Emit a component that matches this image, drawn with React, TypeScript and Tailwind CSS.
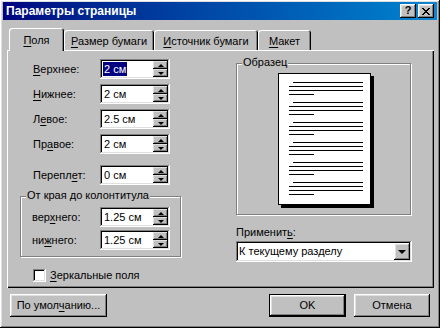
import React from 'react';

const raised = 'shadow-[inset_-1px_-1px_#000,inset_1px_1px_#fff,inset_-2px_-2px_#808080,inset_2px_2px_#dfdfdf]';
const sunken = 'shadow-[inset_-1px_-1px_#fff,inset_1px_1px_#808080,inset_-2px_-2px_#dfdfdf,inset_2px_2px_#000]';
const smallRaised = 'shadow-[inset_-1px_-1px_#000,inset_1px_1px_#dfdfdf,inset_-2px_-2px_#808080]';

// label with an underlined access key
const Acc = ({ pre = '', k, post = '' }: { pre?: string; k: string; post?: string }) => (
    <span>
        {pre}
        <u className="underline-offset-[2px]">{k}</u>
        {post}
    </span>
);

const SpinBtn = ({ up }: { up?: boolean }) => (
    <div className={`flex h-[8px] items-center justify-center bg-[#c0c0c0] ${smallRaised}`}>
        <div
            className={
                up
                    ? 'h-0 w-0 border-x-[3px] border-b-[3px] border-x-transparent border-b-black'
                    : 'h-0 w-0 border-x-[3px] border-t-[3px] border-x-transparent border-t-black'
            }
        />
    </div>
);

const Spin = ({ value, selected }: { value: string; selected?: boolean }) => (
    <div className={`flex h-[20px] w-[70px] bg-white p-[2px] ${sunken}`}>
        <div className="flex flex-1 items-center pl-[1px]">
            <span className={selected ? 'bg-[#000080] px-px leading-[14px] text-white' : 'px-px'}>{value}</span>
        </div>
        <div className="flex w-[15px] flex-col">
            <SpinBtn up />
            <SpinBtn />
        </div>
    </div>
);

const Row = ({ label, value, selected, labelW }: { label: React.ReactNode; value: string; selected?: boolean; labelW: string }) => (
    <div className="flex h-[20px] items-center">
        <div className={labelW}>{label}</div>
        <Spin value={value} selected={selected} />
    </div>
);

const Button = ({ children, w, isDefault }: { children: React.ReactNode; w: string; isDefault?: boolean }) => (
    <div className={`h-[23px] ${w} ${isDefault ? 'border border-black' : ''}`}>
        <div className={`flex h-full w-full items-center justify-center bg-[#c0c0c0] ${raised}`}>{children}</div>
    </div>
);

const Tab = ({ children, w, active }: { children: React.ReactNode; w: string; active?: boolean }) => (
    <div
        className={
            active
                ? `relative z-10 -mb-px flex h-[23px] ${w} justify-center rounded-t-[3px] bg-[#c0c0c0] pt-[6px] shadow-[inset_1px_1px_#fff,inset_-1px_0_#000,inset_-2px_0_#808080]`
                : `flex h-[20px] ${w} justify-center rounded-t-[3px] bg-[#c0c0c0] pt-[5px] shadow-[inset_1px_1px_#fff,inset_-1px_0_#000,inset_-2px_0_#808080]`
        }
    >
        <span className="leading-[13px]">{children}</span>
    </div>
);

const previewGroups = [0, 1, 2, 3, 4, 5];

export default function App() {
    return (
        <div
            className={`flex h-[328px] w-[440px] flex-col bg-[#c0c0c0] px-[3px] pt-[2px] text-[11px] leading-[13px] text-black ${raised}`}
            style={{ fontFamily: '"Liberation Sans", Arial, sans-serif' }}
        >
            {/* Title bar */}
            <div className="flex h-[18px] items-center justify-between bg-gradient-to-r from-[#000080] to-[#1084d0] pl-[3px] pr-[3px]">
                <span className="text-[12px] font-bold text-white">Параметры страницы</span>
                <div className="flex gap-[2px]">
                    <div className={`flex h-[14px] w-[16px] items-center justify-center bg-[#c0c0c0] pb-px text-[11px] font-bold ${raised}`}>?</div>
                    <div className={`flex h-[14px] w-[16px] items-center justify-center bg-[#c0c0c0] ${raised}`}>
                        <svg width="8" height="7" viewBox="0 0 8 7" shapeRendering="crispEdges">
                            <path d="M0 0h2v1H0zM6 0h2v1H6zM1 1h2v1H1zM5 1h2v1H5zM2 2h4v1H2zM3 3h2v1H3zM2 4h4v1H2zM1 5h2v1H1zM5 5h2v1H5zM0 6h2v1H0zM6 6h2v1H6z" fill="#000" />
                        </svg>
                    </div>
                </div>
            </div>

            {/* Tabs */}
            <div className="mt-[8px] ml-[6px] flex h-[22px] items-end">
                <Tab w="w-[55px]" active>
                    <Acc k="П" post="оля" />
                </Tab>
                <Tab w="w-[90px]">
                    <Acc k="Р" post="азмер бумаги" />
                </Tab>
                <Tab w="w-[104px]">
                    <Acc k="И" post="сточник бумаги" />
                </Tab>
                <Tab w="w-[53px]">
                    <Acc k="М" post="акет" />
                </Tab>
            </div>

            {/* Tab panel */}
            <div className="ml-[4px] flex h-[238px] w-[427px] shadow-[inset_1px_1px_#fff,inset_-1px_-1px_#000,inset_-2px_-2px_#808080]">
                {/* Left column */}
                <div className="ml-[13px] flex w-[161px] flex-col pt-[9px]">
                    <div className="flex flex-col gap-[5px]">
                        <Row labelW="w-[80px] pl-[13px]" label={<Acc k="В" post="ерхнее:" />} value="2 см" selected />
                        <Row labelW="w-[80px] pl-[13px]" label={<Acc k="Н" post="ижнее:" />} value="2 см" />
                        <Row labelW="w-[80px] pl-[13px]" label={<Acc pre="Л" k="е" post="вое:" />} value="2.5 см" />
                        <Row labelW="w-[80px] pl-[13px]" label={<Acc pre="Пр" k="а" post="вое:" />} value="2 см" />
                    </div>
                    <div className="mt-[11px]">
                        <Row labelW="w-[80px] pl-[13px]" label={<Acc pre="Перепл" k="е" post="т:" />} value="0 см" />
                    </div>

                    {/* Header/footer group */}
                    <div className="relative mt-[11px] h-[61px] w-[161px] border border-[#808080] shadow-[inset_1px_1px_#fff,1px_1px_#fff]">
                        <span className="absolute -top-[8px] left-[5px] bg-[#c0c0c0] px-px">От края до колонтитула</span>
                        <div className="flex flex-col gap-[3px] pt-[10px]">
                            <Row labelW="w-[79px] pl-[11px]" label={<Acc pre="вер" k="х" post="него:" />} value="1.25 см" />
                            <Row labelW="w-[79px] pl-[11px]" label={<Acc pre="ни" k="ж" post="него:" />} value="1.25 см" />
                        </div>
                    </div>

                    <div className="mt-[12px] flex items-center gap-[4px] pl-[13px]">
                        <div className={`h-[13px] w-[13px] bg-white ${sunken}`} />
                        <Acc k="З" post="еркальные поля" />
                    </div>
                </div>

                {/* Right column */}
                <div className="ml-[55px] flex flex-col pt-[13px]">
                    <div className="relative h-[152px] w-[175px] border border-[#808080] shadow-[inset_1px_1px_#fff,1px_1px_#fff]">
                        <span className="absolute -top-[8px] left-[5px] bg-[#c0c0c0] px-px">Образец</span>
                        <div className="mt-[9px] ml-[41px] flex h-[132px] w-[93px] flex-col gap-[7px] border border-black bg-white pt-[8px] shadow-[3px_3px_0_#000]">
                            {previewGroups.map((g) => (
                                <div key={g} className="flex flex-col gap-[3px]">
                                    <div className="ml-[14px] h-px w-[70px] bg-black" />
                                    <div className="ml-[10px] h-px w-[74px] bg-black" />
                                    <div className="ml-[10px] h-px w-[74px] bg-black" />
                                    <div className="ml-[10px] h-px w-[25px] bg-black" />
                                </div>
                            ))}
                        </div>
                    </div>
                    <div className="mt-[11px] h-[13px]">
                        <Acc pre="Применит" k="ь" post=":" />
                    </div>
                    <div className={`mt-[2px] flex h-[21px] w-[176px] bg-white p-[2px] ${sunken}`}>
                        <div className="flex flex-1 items-center pl-[1px]">К текущему разделу</div>
                        <div className={`flex w-[16px] items-center justify-center bg-[#c0c0c0] ${raised}`}>
                            <div className="h-0 w-0 border-x-[4px] border-t-[4px] border-x-transparent border-t-black" />
                        </div>
                    </div>
                </div>
            </div>

            {/* Bottom buttons */}
            <div className="mt-[6px] flex items-start justify-between pl-[7px] pr-[7px]">
                <Button w="w-[97px]">
                    <Acc pre="По умол" k="ч" post="анию..." />
                </Button>
                <div className="flex gap-[8px]">
                    <Button w="w-[77px]" isDefault>
                        OK
                    </Button>
                    <Button w="w-[76px]">Отмена</Button>
                </div>
            </div>
        </div>
    );
}
